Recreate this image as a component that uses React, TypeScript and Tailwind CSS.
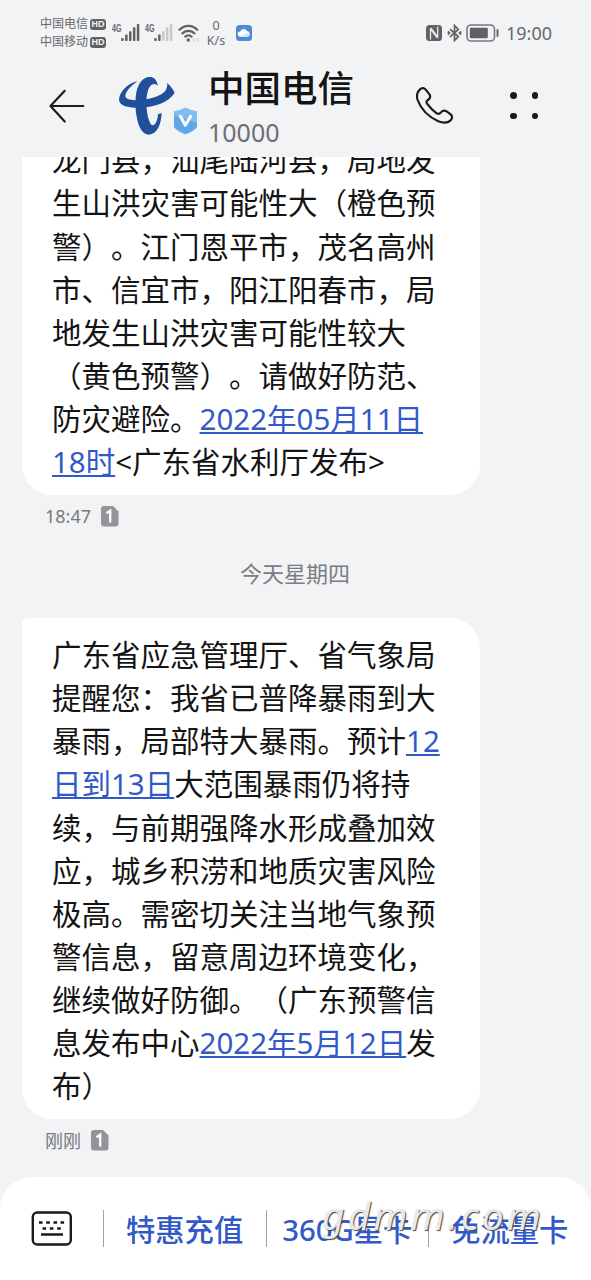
import clsx from 'clsx';

type Segment = string | { link: string };

interface Message {
  lines: Segment[][];
  time: string;
}

const warningMessage: Message = {
  lines: [
    ['龙门县，汕尾陆河县，局地发'],
    ['生山洪灾害可能性大（橙色预'],
    ['警）。江门恩平市，茂名高州'],
    ['市、信宜市，阳江阳春市，局'],
    ['地发生山洪灾害可能性较大'],
    ['（黄色预警）。请做好防范、'],
    ['防灾避险。', { link: '2022年05月11日' }],
    [{ link: '18时' }, '<广东省水利厅发布>'],
  ],
  time: '18:47',
};

const rainMessage: Message = {
  lines: [
    ['广东省应急管理厅、省气象局'],
    ['提醒您：我省已普降暴雨到大'],
    ['暴雨，局部特大暴雨。预计', { link: '12' }],
    [{ link: '日到13日' }, '大范围暴雨仍将持'],
    ['续，与前期强降水形成叠加效'],
    ['应，城乡积涝和地质灾害风险'],
    ['极高。需密切关注当地气象预'],
    ['警信息，留意周边环境变化，'],
    ['继续做好防御。（广东预警信'],
    ['息发布中心', { link: '2022年5月12日' }, '发'],
    ['布）'],
  ],
  time: '刚刚',
};

export default function App() {
  return (
    <div className="flex h-[1280px] w-[591px] flex-col overflow-hidden bg-[#f1f3f5] font-['Noto_Sans','Noto_Sans_CJK_SC',sans-serif] text-[#141414] [text-spacing-trim:space-all]">
      <StatusBar />
      <Header />
      <main className="flex min-h-0 flex-1 flex-col justify-end overflow-hidden pb-[15px] pl-[22px]">
        <MessageBubble message={warningMessage} />
        <div className="mr-[23px] mb-[8px] flex h-[72px] shrink-0 items-center justify-center text-[22px] text-[#7b7d80]">
          今天星期四
        </div>
        <MessageBubble message={rainMessage} />
      </main>
      <QuickMenu />
    </div>
  );
}

function StatusBar() {
  return (
    <div className="flex h-[66px] shrink-0 items-center pr-[39px] pl-[40px] text-[#66686b]">
      <div className="flex w-[72px] flex-col text-[12px] leading-[18px]">
        <Carrier name="中国电信" />
        <Carrier name="中国移动" />
      </div>
      <Signal level={5} />
      <Signal level={2} />
      <WifiIcon />
      <div className="ml-[4px] flex w-[24px] flex-col items-center text-[12.5px] leading-[15px]">
        <span>0</span>
        <span>K/s</span>
      </div>
      <CloudIcon />
      <div className="flex-1" />
      <NfcIcon />
      <BluetoothIcon />
      <BatteryIcon />
      <span className="ml-[7px] text-[18px] leading-none">19:00</span>
    </div>
  );
}

function Carrier({ name }: { name: string }) {
  return (
    <div className="flex items-center gap-[2px] whitespace-nowrap">
      <span>{name}</span>
      <span className="flex h-[11px] w-[16px] items-center justify-center rounded-[3px] bg-[#5f6164] font-['Liberation_Sans',sans-serif] text-[9px] leading-none font-bold text-[#f1f3f5]">
        HD
      </span>
    </div>
  );
}

function Signal({ level }: { level: number }) {
  const tops = [15, 11.5, 8.3, 4.3, 1];
  return (
    <svg className="mr-[5px] shrink-0" width="28" height="20" viewBox="0 0 28 20">
      <text
        x="0"
        y="9"
        textLength="9.5"
        lengthAdjust="spacingAndGlyphs"
        className="fill-[#66686b] font-['Liberation_Sans',sans-serif] text-[11px] font-bold"
      >
        4G
      </text>
      {tops.map((top, i) => (
        <rect
          key={top}
          x={9.2 + i * 3.9}
          y={top}
          width="2.5"
          height={18 - top}
          rx="0.8"
          className={clsx(i < level ? 'fill-[#5f6164]' : 'fill-[#c6c8ca]')}
        />
      ))}
    </svg>
  );
}

function WifiIcon() {
  return (
    <svg className="shrink-0" width="22" height="20" viewBox="0 0 22 20" fill="none" stroke="#5f6164" strokeWidth="2.1">
      <path d="M.8 7.4C6.5 1.3 14.3 1.3 20 7.4" />
      <path d="M3.7 11C7.7 6.8 13.1 6.8 17.1 11" />
      <path d="M6.6 14.2C9.1 11.8 11.7 11.8 14.2 14.2" />
      <circle cx="10.3" cy="17" r="1.7" fill="#5f6164" stroke="none" />
      <path d="M16.5 15.3 14.8 17l1.7 1.7M18.5 15.3l1.7 1.7-1.7 1.7" stroke="#bfc1c4" strokeWidth="1" />
    </svg>
  );
}

function CloudIcon() {
  return (
    <svg className="ml-[8px] shrink-0" width="16" height="16" viewBox="0 0 16 16">
      <rect width="16" height="16" rx="3.5" fill="#5288db" />
      <path d="M4.5 11.8a2.7 2.7 0 0 1-.3-5.4A3.7 3.7 0 0 1 11 6a3 3 0 0 1 .7 5.8z" fill="#fff" />
      <path d="M7 11.8c.5-2.5 3-4 5.2-3.5 2 .9 1.8 3.3-.7 3.5z" fill="#d5e5fb" />
    </svg>
  );
}

function NfcIcon() {
  return (
    <svg className="shrink-0" width="16" height="16" viewBox="0 0 16 16" fill="none">
      <rect width="16" height="16" rx="3.5" fill="#5f6164" />
      <path d="M4.5 14.5V4.2l6.8 8.6" stroke="#f1f3f5" strokeWidth="1.2" />
      <path d="M5 3.2 11.7 11.8V1.5" stroke="#f1f3f5" strokeWidth="1.2" />
    </svg>
  );
}

function BluetoothIcon() {
  return (
    <svg className="ml-[5px] shrink-0" width="15" height="18" viewBox="0 0 15 18" fill="none" stroke="#5f6164" strokeWidth="1.7">
      <path d="M3 5.2 11.3 12.5 7.5 16.5V1.5L11.3 5.5 3 12.8" />
      <path d="M.8 7.5 2.5 9 .8 10.5M14.2 7.5 12.5 9l1.7 1.5" />
    </svg>
  );
}

function BatteryIcon() {
  return (
    <svg className="ml-[4px] shrink-0" width="33" height="18" viewBox="0 0 33 18">
      <rect x="1" y="1" width="27.5" height="16" rx="4" fill="none" stroke="#77797c" strokeWidth="1.6" />
      <rect x="3.8" y="3.8" width="18" height="10.4" rx="1.2" fill="#5f6164" />
      <rect x="30.5" y="5" width="2" height="8" rx="1" fill="#66686b" />
    </svg>
  );
}

function Header() {
  return (
    <header className="flex h-[91px] shrink-0 pl-[48px]">
      <svg className="mt-[23px] shrink-0" width="38" height="34" viewBox="0 0 38 34" fill="none" stroke="#1d1d1f" strokeWidth="2.2" strokeLinecap="round" strokeLinejoin="round">
        <path d="M2.5 17H35.3M16.7 1.8 2.5 17l14.2 15.5" />
      </svg>
      <div className="relative mt-[10px] ml-[32px] h-[60px] w-[90px] shrink-0">
        <TelecomLogo />
        <ShieldBadge />
      </div>
      <div className="flex w-[208px] shrink-0 flex-col whitespace-nowrap">
        <h1 className="-mt-px text-[36.5px] leading-[46px] font-medium">中国电信</h1>
        <p className="text-[25px] leading-[42px] text-[#6d6f72]">10000</p>
      </div>
      <svg className="mt-[20px] shrink-0" width="40" height="40" viewBox="48 48 120 120" fill="none" stroke="#1a1a1a" strokeWidth="6.5" strokeLinejoin="round">
        <path d="M60 58C66 52 74 54 77 59L89 74C92 80 90 86 84 90C78 94 78 97 83 103C90 113 101 123 110 130C116 133 119 132 123 127C128 121 135 121 141 125L152 133C158 138 157 145 152 151C143 159 130 160 115 154C85 140 62 115 53 90C49 78 51 66 60 58Z" />
      </svg>
      <div className="mt-[26px] ml-[54px] grid h-[27px] w-[28px] shrink-0 grid-cols-[6.5px_6.5px] content-between justify-between">
        {[0, 1, 2, 3].map((dot) => (
          <span key={dot} className="size-[6.5px] rounded-full bg-[#1a1a1a]" />
        ))}
      </div>
    </header>
  );
}

function TelecomLogo() {
  return (
    <svg width="58" height="60" viewBox="264 48 174 180" fill="#204f9b">
      <path d="M384 78C380 56 370 50 356 51C338 53 325 72 320 92C314 120 316 150 321 175C326 205 340 224 356 224C382 222 393 195 395 159L384 163C382 190 371 203 362 192C350 172 345 120 353 95C358 76 370 64 384 78Z" />
      <path d="M323 63C290 71 267 98 267 120C269 140 300 144 330 143C375 141 415 128 434 98C429 87 421 77 411 69C415 90 400 108 352 117C310 124 287 120 286 108C287 93 304 77 323 63Z" />
    </svg>
  );
}

function ShieldBadge() {
  return (
    <svg className="absolute top-[31px] left-[55px]" width="25" height="28" viewBox="0 0 25 28">
      <path d="M12.5.8Q18 4 24 4.5V20Q21 24.5 12.5 27.3Q4 24.5 1 20V4.5Q7 4 12.5.8Z" fill="#62a5e9" />
      <path d="M12.5.8Q18 4 24 4.5V16L1 8V4.5Q7 4 12.5.8Z" fill="#82bcf0" />
      <path d="M7.3 9.3 12.3 18.3 17.7 9.3" fill="none" stroke="#fff" strokeWidth="3" strokeLinecap="round" strokeLinejoin="round" />
    </svg>
  );
}

function MessageBubble({ message }: { message: Message }) {
  return (
    <div className="flex shrink-0 flex-col">
      <div className="w-[458px] rounded-[30px] rounded-tl-[6px] bg-white pt-[15px] pr-4 pb-[11.5px] pl-[30px] text-[29.5px] leading-[43.15px]">
        {message.lines.map((line, i) => (
          <p key={i} className="h-[43.15px] whitespace-nowrap">
            {line.map((segment, j) =>
              typeof segment === 'string' ? (
                <span key={j}>{segment}</span>
              ) : (
                <a
                  key={j}
                  className="text-[#3159c9] underline decoration-[1.5px] underline-offset-[2px] [text-decoration-skip-ink:none]"
                >
                  {segment.link}
                </a>
              )
            )}
          </p>
        ))}
      </div>
      <div className="flex h-[43px] items-center gap-[10px] pl-[23px] text-[18px] text-[#77797c]">
        <span className="pt-px">{message.time}</span>
        <SimIcon />
      </div>
    </div>
  );
}

function SimIcon() {
  return (
    <svg width="18" height="21" viewBox="0 0 18 21">
      <path d="M3 0h9l5.5 5.5V17.5a3 3 0 0 1-3 3H3a3 3 0 0 1-3-3V3a3 3 0 0 1 3-3Z" fill="#929497" />
      <path d="M5.5 7.2 9.2 4.6V16.5" fill="none" stroke="#fff" strokeWidth="2.3" />
    </svg>
  );
}

function QuickMenu() {
  return (
    <footer className="relative flex h-[103px] shrink-0 items-center rounded-t-[32px] bg-white pl-[31px] text-[29.3px] leading-none font-medium whitespace-nowrap text-[#3159c9]">
      <svg className="shrink-0" width="42" height="35" viewBox="0 0 42 35" fill="none" stroke="#1a1a1a" strokeWidth="2.4">
        <rect x="1.8" y="1.5" width="38" height="32" rx="4.5" />
        <path d="M8 11.5h3.6M15.2 11.5h3.6M22.5 11.5h3.6M29.5 11.5h3.6M11.5 17.5h3.6M18.8 17.5h3.6M26.2 17.5h3.6M10 23.5h22" />
      </svg>
      <Divider className="ml-[30px]" />
      <span className="ml-[22px] pt-[4px]">特惠充值</span>
      <Divider className="ml-[23px]" />
      <span className="ml-[15px] w-[131px] pt-[4px]">360G星卡</span>
      <Divider className="ml-[15px]" />
      <span className="ml-[22px] pt-[4px]">免流量卡</span>
      <span className="absolute top-[11px] left-[322px] font-['Noto_Sans',sans-serif] text-[39px] leading-[54px] font-normal tracking-[3.1px] text-[#e9e9e9] italic [text-shadow:1px_1px_1px_#444]">
        gdmm.com
      </span>
    </footer>
  );
}

function Divider({ className }: { className?: string }) {
  return <span className={clsx('h-[37px] w-px shrink-0 bg-[#a0a2a5]', className)} />;
}
